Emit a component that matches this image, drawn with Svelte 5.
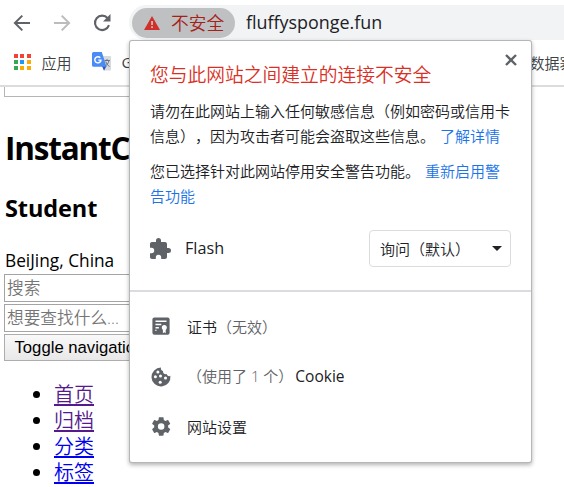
<script>
  const nav = [
    { label: '首页', visited: true },
    { label: '归档', visited: true },
    { label: '分类', visited: false },
    { label: '标签', visited: false }
  ];
  const appColors = ['#f44336', '#f44336', '#f44336', '#34a853', '#2196f3', '#fbab04', '#34a853', '#fbab04', '#fbab04'];
</script>

<div class="window">
  <header class="toolbar">
    <svg class="back" width="18" height="18" viewBox="0 0 18 18" fill="none" stroke="#5f6368" stroke-width="2"><path d="M17 9H2M9.3 1.6 1.9 9l7.4 7.4" /></svg>
    <svg class="forward" width="18" height="18" viewBox="0 0 18 18" fill="none" stroke="#babcbe" stroke-width="2"><path d="M1 9h15M8.7 1.6 16.1 9l-7.4 7.4" /></svg>
    <svg class="reload" width="18" height="18" viewBox="0 0 18 18"><path d="M14.7 4.2A7.2 7.2 0 1 0 16 11.2" fill="none" stroke="#5f6368" stroke-width="2.1" /><path d="M17.5 0v7.4H10z" fill="#5f6368" /></svg>
    <div class="omnibox">
      <div class="chip">
        <svg width="16" height="14" viewBox="0 0 16 14"><path d="M8 0 16 14H0z" fill="#d1302a" /><path d="M7.2 5h1.7v4H7.2zm0 5.2h1.7v1.7H7.2z" fill="#c4c5c6" /></svg>
        <span>不安全</span>
      </div>
      <span class="url">fluffysponge.fun</span>
    </div>
  </header>

  <div class="bookmarks">
    <div class="apps">
      {#each appColors as color}<i style="background:{color}"></i>{/each}
    </div>
    <span class="apps-label">应用</span>
    <svg class="translate" width="20" height="20" viewBox="0 0 20 20">
      <path d="M8 4h10a1 1 0 0 1 1 1v12.500a1 1 0 0 1-1 1h-6z" fill="#d7dade" />
      <path d="M10 14h4.500L12 18.700z" fill="#3053c8" />
      <path d="M1.500 0h8.300l4.700 14.700H1.500A1.500 1.500 0 0 1 0 13.200V1.500A1.500 1.500 0 0 1 1.500 0z" fill="#4b8bf5" />
      <path d="M8.300 5.800A3.100 3.100 0 1 0 9 8.100H6.300" fill="none" stroke="#fff" stroke-width="1.400" />
      <path d="M12.500 8.500h5.300M15 7v1.500M17 8.500c-.7 3-2 4.500-3.600 5.700M13.800 9.500c.8 2.500 2 4 3.700 4.900" fill="none" stroke="#68747c" stroke-width="1" />
    </svg>
    <span class="google">G</span>
    <span class="data">数据寨</span>
  </div>

  <main>
    <div class="frame"></div>
    <h1>InstantC</h1>
    <h2>Student</h2>
    <p class="place">BeiJing, China</p>
    <div class="field">搜索</div>
    <div class="field">想要查找什么...</div>
    <div class="toggle">Toggle navigation</div>
    <ul>
      {#each nav as item}
        <li><span class="link" class:visited={item.visited}>{item.label}</span></li>
      {/each}
    </ul>
  </main>

  <section class="popup">
    <svg class="close" width="12" height="12" viewBox="0 0 12 12"><path d="m1 1 10 10M11 1 1 11" stroke="#5f6368" stroke-width="2.400" /></svg>
    <div class="notice">
      <div class="title">您与此网站之间建立的连接不安全</div>
      <div class="copy">请勿在此网站上输入任何敏感信息（例如密码或信用卡<br />信息），因为攻击者可能会盗取这些信息。<a class="more">了解详情</a></div>
      <div class="copy">您已选择针对此网站停用安全警告功能。<a class="more">重新启用警<br />告功能</a></div>
      <div class="permission">
        <svg width="24" height="24" viewBox="0 0 24 24" fill="#5f6368"><path d="M20.500 11H19V7c0-1.100-.9-2-2-2h-4V3.500a2.500 2.500 0 0 0-5 0V5H4c-1.100 0-1.990.9-1.990 2v3.800H3.500a2.700 2.700 0 0 1 0 5.400H2V20c0 1.100.9 2 2 2h3.800v-1.500a2.700 2.700 0 0 1 5.400 0V22H17c1.100 0 2-.9 2-2v-4h1.500a2.500 2.500 0 0 0 0-5z" /></svg>
        <span class="flash">Flash</span>
        <div class="select"><span>询问（默认）</span><i></i></div>
      </div>
    </div>
    <div class="rows">
      <div class="row">
        <svg width="24" height="24" viewBox="0 0 24 24"><rect x="3.400" y="2.600" width="17.200" height="17.200" rx="2" fill="#5f6368" /><path d="M6.500 6.200h11M6.500 9.500h5.800M6.500 12.700h3.400" stroke="#fff" stroke-width="1.400" /><circle cx="6.900" cy="15.200" r=".7" fill="#fff" /><circle cx="15.300" cy="12.600" r="2.500" fill="#fff" /><path d="M13.900 13.200h2.800v5l-1.400-1-1.400 1z" fill="#fff" /></svg>
        <span class="text">证书<em>（无效）</em></span>
      </div>
      <div class="row">
        <svg width="24" height="24" viewBox="0 0 24 24"><path d="M12 2.500a9.500 9.500 0 1 0 9.400 8.300c-1.500.8-3.400.1-3.800-1.700-2.300.4-3.900-1-3.600-3.100C12.300 5.500 11.500 4.300 12 2.500z" fill="#5f6368" /><g fill="#fff"><circle cx="8.900" cy="7" r="1.500" /><circle cx="6.400" cy="11.800" r="1.500" /><circle cx="11.500" cy="11" r="1.500" /><circle cx="16.500" cy="13" r="1.500" /><circle cx="11.200" cy="17.300" r="1.500" /></g></svg>
        <span class="text"><em>（使用了 1 个）</em><b>Cookie</b></span>
      </div>
      <div class="row">
        <svg width="24" height="24" viewBox="0 0 24 24" fill="#5f6368"><path transform="translate(1 .3) scale(.93)" d="M19.430 12.980c.04-.32.07-.64.07-.98s-.03-.66-.07-.98l2.110-1.650c.19-.15.24-.42.12-.64l-2-3.460c-.12-.22-.39-.3-.61-.22l-2.490 1c-.52-.4-1.080-.73-1.690-.98l-.38-2.650C14.460 2.180 14.250 2 14 2h-4c-.25 0-.46.18-.49.42l-.38 2.650c-.61.25-1.170.59-1.690.98l-2.490-1c-.23-.09-.49 0-.61.22l-2 3.460c-.13.22-.07.49.12.64l2.110 1.650c-.04.32-.07.65-.07.98s.03.66.07.98l-2.110 1.650c-.19.15-.24.42-.12.64l2 3.460c.12.22.39.3.61.22l2.490-1c.52.4 1.080.73 1.690.98l.38 2.650c.03.24.24.42.49.42h4c.25 0 .46-.18.49-.42l.38-2.650c.61-.25 1.170-.59 1.690-.98l2.490 1c.23.09.49 0 .61-.22l2-3.460c.12-.22.07-.49-.12-.64zM12 15.500a3.500 3.500 0 1 1 0-7 3.500 3.500 0 0 1 0 7z" /></svg>
        <span class="text">网站设置</span>
      </div>
    </div>
  </section>
</div>

<style>
  .window {
    position: relative;
    width: 564px;
    height: 487px;
    overflow: hidden;
    background: #fff;
    color: #000;
    font-family: 'Open Sans', 'Noto Sans CJK SC', sans-serif;
    text-spacing-trim: space-all;
    white-space: nowrap;
  }
  .window * { box-sizing: border-box; }
  svg { display: block; flex: none; }
  .toolbar {
    display: flex;
    align-items: center;
    height: 40px;
    padding: 5px 0 0 13px;
  }
  .forward { margin-left: 22px; }
  .reload { margin-left: 22px; }
  .omnibox {
    display: flex;
    align-items: center;
    flex: 1;
    height: 35px;
    margin-left: 18px;
    padding-left: 3px;
    border-radius: 18px 0 0 18px;
    background: #f1f3f4;
  }
  .chip {
    display: flex;
    align-items: center;
    width: 103px;
    height: 30px;
    padding-left: 12px;
    border-radius: 15px;
    background: #bfc0c1;
    color: #a52019;
    font-size: 17.700px;
    font-weight: 350;
  }
  .chip span { margin: -1px 0 0 11px; }
  .url {
    margin: -2px 0 0 11px;
    color: #202124;
    font-size: 17.900px;
  }
  .bookmarks {
    display: flex;
    align-items: center;
    height: 47px;
    padding: 0 0 1px 14px;
    border-bottom: 2px solid #dadce0;
    color: #3c4043;
    font-size: 15px;
  }
  .apps {
    display: grid;
    grid-template-columns: repeat(3, 4px);
    gap: 2px;
    column-gap: 2.300px;
  }
  .apps i { height: 4px; }
  .apps-label { margin: 1px 0 0 11px; font-weight: 350; }
  .translate { margin-left: 20px; }
  .google { margin-left: 10px; }
  .data { margin: 1px 0 0 397px; font-weight: 350; }
  main { padding-left: 4px; }
  .frame {
    width: 180px;
    height: 10px;
    border: solid #b5b5b5;
    border-width: 0 0 1px 1px;
  }
  h1, h2, p { margin: 0 0 0 1px; }
  h1 {
    margin-top: 28px;
    font-size: 31.500px;
    line-height: 46px;
    letter-spacing: -1.200px;
  }
  h2 {
    margin-top: 20px;
    font-size: 23.500px;
    line-height: 34px;
    letter-spacing: -0.100px;
  }
  .place {
    margin-top: 22px;
    font-size: 17.300px;
    line-height: 27px;
  }
  .field {
    width: 220px;
    height: 28px;
    margin-bottom: 2px;
    padding-left: 2px;
    border: 1px solid #a4a4a4;
    color: #757575;
    font-size: 16.700px;
    font-weight: 350;
    line-height: 25px;
  }
  .toggle {
    width: 156px;
    height: 27px;
    padding-left: 9.500px;
    border: 1px solid #adadad;
    background: linear-gradient(#f9f9f9, #e8e8e8);
    font: 16.700px/25px 'Liberation Sans', sans-serif;
  }
  ul {
    margin: 20px 0 0;
    padding: 0;
    list-style: none;
  }
  li {
    display: flex;
    align-items: center;
    height: 26px;
    padding-left: 29px;
    font-size: 20px;
    font-weight: 350;
  }
  li::before {
    content: '';
    width: 7px;
    height: 7px;
    margin-right: 14px;
    border-radius: 50%;
    background: #000;
  }
  .link {
    margin-top: -2px;
    color: #00e;
    text-decoration: underline;
    text-decoration-thickness: 2px;
    text-underline-offset: 2px;
    text-decoration-skip-ink: none;
  }
  .visited { color: #551a8b; }
  .popup {
    position: absolute;
    left: 130px;
    top: 41px;
    width: 401px;
    height: 421px;
    border-radius: 2px;
    background: #fff;
    box-shadow: 0 0 0 1px #b5b6b7, 0 2px 4px 1px rgba(0, 0, 0, 0.3);
    color: #202124;
    font-size: 15px;
    font-weight: 350;
  }
  .close {
    position: absolute;
    left: 375px;
    top: 13px;
  }
  .notice {
    height: 251px;
    padding: 20px 0 0 20px;
    border-bottom: 2px solid #dadce0;
  }
  .title {
    color: #d93025;
    font-size: 18.750px;
    line-height: 28px;
  }
  .copy {
    margin-top: 10px;
    line-height: 25px;
  }
  .more {
    margin-left: 5px;
    color: #1a73e8;
  }
  .permission {
    display: flex;
    align-items: center;
    margin-top: 21px;
  }
  .permission svg { margin-left: -2px; }
  .flash {
    width: 184px;
    margin: -2px 0 0 13px;
    font-size: 16.200px;
    font-weight: 400;
  }
  .select {
    display: flex;
    align-items: center;
    justify-content: space-between;
    width: 142px;
    height: 37px;
    padding: 0 8px 0 10px;
    border: 1px solid #dadce0;
    border-radius: 4px;
  }
  .select i {
    border: 5px solid transparent;
    border-top-color: #202124;
    border-bottom: 0;
  }
  .rows { padding: 10px 0 0 19px; }
  .row {
    display: flex;
    align-items: center;
    height: 50px;
  }
  .text { margin: -2px 0 0 14px; }
  em { color: #5f6368; font-style: normal; }
  b {
    margin-left: 2px;
    font-size: 15.500px;
    font-weight: 400;
  }
</style>
